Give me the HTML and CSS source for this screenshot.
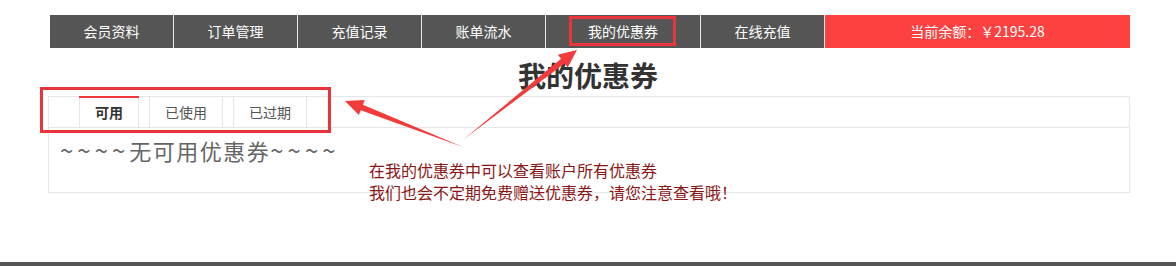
FILE: index.html
```html
<!DOCTYPE html>
<html lang="zh-CN">
<head>
<meta charset="utf-8">
<title>我的优惠券</title>
<link rel="stylesheet" href="styles.css">
</head>
<body>
<div class="page">
  <nav class="nav">
    <a class="nav-item">会员资料</a>
    <a class="nav-item">订单管理</a>
    <a class="nav-item">充值记录</a>
    <a class="nav-item">账单流水</a>
    <a class="nav-item nav-wide">我的优惠券</a>
    <a class="nav-item">在线充值</a>
    <div class="nav-balance">当前余额：￥2195.28</div>
  </nav>
  <h1 class="title">我的优惠券</h1>
  <section class="panel">
    <div class="tabs">
      <span class="tab tab-active">可用</span>
      <span class="tab">已使用</span>
      <span class="tab">已过期</span>
    </div>
    <div class="panel-body">
      <p class="empty"><span class="tilde">~~~~</span>无可用优惠券<span class="tilde">~~~~</span></p>
    </div>
  </section>
  <footer class="footer"></footer>
</div>

<div class="mark mark-tabs"></div>
<div class="mark mark-nav"></div>
<svg class="arrows" width="1176" height="266" viewBox="0 0 1176 266">
  <polygon points="345,101 364.7,100.1 362.9,104.7 463,147 360.7,110.3 358.9,115" fill="#f23b3b"/>
  <polygon points="577,50 567.7,67.4 564.6,63.5 464,139 561,58.7 557.9,54.8" fill="#f23b3b"/>
</svg>
<div class="note">在我的优惠券中可以查看账户所有优惠券<br>我们也会不定期免费赠送优惠券，请您注意查看哦！</div>
</body>
</html>
```

FILE: styles.css
```css
html, body {
  margin: 0;
  padding: 0;
  background: #fff;
}
body {
  position: relative;
  width: 1176px;
  height: 266px;
  overflow: hidden;
  font-family: "Noto Sans CJK SC", "Liberation Sans", sans-serif;
  color: #333;
}
.page {
  padding-top: 15px;
}
.nav {
  display: flex;
  width: 1080px;
  height: 33px;
  margin-left: 50px;
}
.nav-item {
  flex: 0 0 124px;
  box-sizing: border-box;
  border-right: 1px solid #e8e8e8;
  background: #555;
  color: #fff;
  font-size: 14px;
  line-height: 33px;
  text-align: center;
}
.nav-wide {
  flex-basis: 155px;
}
.nav-balance {
  flex: 1;
  background: #fd4141;
  color: #fff;
  font-size: 14px;
  line-height: 33px;
  text-align: center;
}
.title {
  margin: 6px 0 0;
  font-size: 28px;
  font-weight: bold;
  line-height: 42px;
  text-align: center;
  color: #333;
}
.panel {
  width: 1080px;
  height: 95px;
  margin-left: 48px;
  border: 1px solid #e6e6e6;
}
.tabs {
  display: flex;
  height: 30px;
  padding-left: 30px;
  border-bottom: 1px solid #e6e6e6;
}
.tab {
  position: relative;
  margin-right: 10px;
  padding: 0 15px;
  border-left: 1px solid #e6e6e6;
  border-right: 1px solid #e6e6e6;
  font-size: 14px;
  line-height: 30px;
  color: #555;
}
.tab-active {
  font-weight: bold;
  color: #333;
}
.tab-active::before {
  content: "";
  position: absolute;
  left: -1px;
  right: -1px;
  top: -1px;
  height: 2px;
  background: #f0393d;
}
.panel-body {
  padding: 7px 11px 0;
}
.empty {
  margin: 0;
  font-size: 22px;
  line-height: 30px;
  letter-spacing: 1.5px;
  color: #666;
}
.tilde {
  font-size: 24px;
  letter-spacing: 4px;
}
.footer {
  height: 4px;
  margin-top: 69px;
  background: #555;
}
.mark {
  position: absolute;
  border: 3px solid #e8343a;
}
.mark-tabs {
  left: 40px;
  top: 87px;
  width: 285px;
  height: 40px;
}
.mark-nav {
  left: 569px;
  top: 16px;
  width: 101px;
  height: 24px;
}
.arrows {
  position: absolute;
  left: 0;
  top: 0;
  pointer-events: none;
}
.note {
  position: absolute;
  left: 369px;
  top: 159px;
  font-size: 16px;
  line-height: 22px;
  color: #8b1616;
}
```
